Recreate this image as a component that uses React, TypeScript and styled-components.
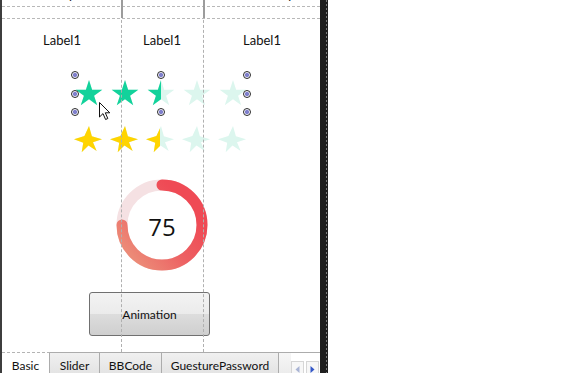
import React, { useId } from 'react';
import styled, { createGlobalStyle } from 'styled-components';

const TEAL = '#12d29b';
const GOLD = '#ffd400';
const FADED = '#dcf6ee';

// regular five point star, 28px box
const PLAIN_STAR =
  '14,0 17.14,9.67 27.31,9.67 19.09,15.65 22.23,25.33 14,19.35 5.77,25.33 8.91,15.65 0.69,9.67 10.86,9.67';
// the lower row leans a little, arms flattened
const LEAN_STAR =
  '15,0 17.9,10.15 28,13.3 19,16.3 22.7,25 14.5,19.5 7.7,26.3 9.2,16.75 0,13.3 10.4,9.9';

const GlobalStyle = createGlobalStyle`
  html, body {
    margin: 0;
    padding: 0;
    background: #ffffff;
  }
  body {
    font-family: Lato, "Noto Sans", sans-serif;
    color: #111111;
  }
`;

type StarProps = { color: string; level: number; points: string };

const Star = ({ color, level, points }: StarProps) => {
  const id = 'clip' + useId().replace(/[^a-zA-Z0-9]/g, '');
  return (
    <StarSvg viewBox="0 0 28 28">
      <polygon points={points} fill={FADED} />
      {level > 0 && (
        <>
          <clipPath id={id}>
            <rect x="0" y="0" width={28 * level} height="28" />
          </clipPath>
          <polygon points={points} fill={color} clipPath={`url(#${id})`} />
        </>
      )}
    </StarSvg>
  );
};

const levels = [1, 1, 0.5, 0, 0];

// arc goes clockwise from 12 o'clock; 75 ends at 9 o'clock
const arcPath = (value: number, r: number, c: number) => {
  const a = (value / 100) * Math.PI * 2;
  const x = c + r * Math.sin(a);
  const y = c - r * Math.cos(a);
  const large = value > 50 ? 1 : 0;
  return `M${c} ${c - r} A${r} ${r} 0 ${large} 1 ${x.toFixed(2)} ${y.toFixed(2)}`;
};

const Gauge = ({ value }: { value: number }) => (
  <GaugeWrap>
    <svg width="92" height="92" viewBox="0 0 92 92">
      <defs>
        <linearGradient id="ring" x1="80" y1="10" x2="10" y2="70" gradientUnits="userSpaceOnUse">
          <stop offset="0.2" stopColor="#ef4a55" />
          <stop offset="0.6" stopColor="#ed6163" />
          <stop offset="1" stopColor="#ec8a77" />
        </linearGradient>
      </defs>
      <circle cx="46" cy="46" r="40" fill="none" stroke="#f5e1e3" strokeWidth="11" />
      <path
        d={arcPath(value, 40, 46)}
        fill="none"
        stroke="url(#ring)"
        strokeWidth="11"
        strokeLinecap="round"
      />
    </svg>
    <GaugeValue>{value}</GaugeValue>
  </GaugeWrap>
);

const Cursor = () => (
  <CursorSvg width="12" height="19" viewBox="0 0 12 19">
    <path
      d="M0.5 0.5 L0.5 15 L4 11.6 L6.6 17.5 L8.8 16.5 L6.3 10.8 L10.8 10.8 Z"
      fill="#ffffff"
      stroke="#111111"
      strokeWidth="1"
      strokeLinejoin="round"
    />
  </CursorSvg>
);

const App = () => {
  return (
    <Screen>
      <GlobalStyle />
      <Designer>
        <TopStrip>
          <Cut>y</Cut>
          <Cut>y</Cut>
        </TopStrip>
        <HeaderRow />
        <LabelRow>
          <Label>Label1</Label>
          <Label>Label1</Label>
          <Label>Label1</Label>
        </LabelRow>
        <RatingRow>
          {levels.map((l, i) => (
            <Star key={i} color={TEAL} level={l} points={PLAIN_STAR} />
          ))}
          <Handle $x={0} $y={0} />
          <Handle $x={0} $y={18.5} />
          <Handle $x={0} $y={37} />
          <Handle $x={86} $y={0} />
          <Handle $x={86} $y={37} />
          <Handle $x={172} $y={0} />
          <Handle $x={172} $y={18.5} />
          <Handle $x={172} $y={37} />
          <Cursor />
        </RatingRow>
        <GoldRow>
          {levels.map((l, i) => (
            <Star key={i} color={GOLD} level={l} points={LEAN_STAR} />
          ))}
        </GoldRow>
        <Gauge value={75} />
        <Button>Animation</Button>
        <Spacer />
        <TabBar>
          <Tab $width={48} $active>
            Basic
          </Tab>
          <Tab $width={50}>Slider</Tab>
          <Tab $width={62}>BBCode</Tab>
          <Tab $width={117}>GuesturePassword</Tab>
          <PartTab />
          <Scroller>
            <ScrollBtn>
              <svg width="5" height="7" viewBox="0 0 5 7">
                <path d="M4.5 0 L0.5 3.5 L4.5 7 Z" fill="#a9b4d4" />
              </svg>
            </ScrollBtn>
            <ScrollBtn>
              <svg width="5" height="7" viewBox="0 0 5 7">
                <path d="M0.5 0 L4.5 3.5 L0.5 7 Z" fill="#3458c8" />
              </svg>
            </ScrollBtn>
          </Scroller>
        </TabBar>
        <Guide $left={119} />
        <Guide $left={201} />
      </Designer>
      <Frame />
      <Blank />
    </Screen>
  );
};

const Screen = styled.div`
  display: flex;
  width: 577px;
  height: 373px;
  overflow: hidden;
  background: #ffffff;
`;

const Designer = styled.div`
  position: relative;
  display: flex;
  flex-direction: column;
  width: 320px;
  height: 100%;
  box-sizing: border-box;
  border-left: 2px solid #3d3d3d;
  background: #ffffff;
`;

const Frame = styled.div`
  width: 8px;
  height: 100%;
  background:
    repeating-linear-gradient(#7c7c7c 0 2px, transparent 2px 4px) 6px 0 / 1px 100% no-repeat,
    #1e1e1e;
`;

const Blank = styled.div`
  flex: 1;
  background: #ffffff;
`;

const TopStrip = styled.div`
  display: flex;
  justify-content: space-between;
  height: 6px;
  padding: 0 26px 0 66px;
  overflow: hidden;
`;

const Cut = styled.span`
  margin-top: -12px;
  font-size: 13px;
  line-height: 13px;
`;

const HeaderRow = styled.div`
  height: 11px;
  border-top: 1px dashed #b8b8b8;
  border-bottom: 1px dashed #b8b8b8;
`;

const LabelRow = styled.div`
  display: grid;
  grid-template-columns: repeat(3, 100px);
  margin: 13px 0 0 10px;
`;

const Label = styled.span`
  font-size: 13px;
  line-height: 16px;
  text-align: center;
`;

const RatingRow = styled.div`
  position: relative;
  display: flex;
  align-items: center;
  gap: 8px;
  width: 172px;
  height: 37px;
  margin: 27px 0 0 73px;
`;

const GoldRow = styled.div`
  display: flex;
  align-items: center;
  gap: 8px;
  width: 172px;
  height: 28px;
  margin: 14px 0 0 72px;
`;

const StarSvg = styled.svg`
  display: block;
  flex: none;
  width: 28px;
  height: 28px;
  overflow: visible;
`;

const Handle = styled.span<{ $x: number; $y: number }>`
  position: absolute;
  left: ${({ $x }) => $x - 4}px;
  top: ${({ $y }) => $y - 4}px;
  width: 6px;
  height: 6px;
  border: 1px solid #2b2b2b;
  border-radius: 50%;
  background: radial-gradient(circle, #7f7fcc 0 1.8px, #f4f4ff 2.4px);
`;

const CursorSvg = styled.svg`
  position: absolute;
  left: 24px;
  top: 27px;
`;

const GaugeWrap = styled.div`
  display: grid;
  place-items: center;
  width: 92px;
  height: 92px;
  margin: 25px 0 0 114px;

  & > * {
    grid-area: 1 / 1;
  }
`;

const GaugeValue = styled.span`
  font-family: "Open Sans", "Noto Sans", sans-serif;
  font-size: 24px;
  line-height: 28px;
  padding-top: 3px;
  color: #111111;
`;

const Button = styled.button`
  width: 121px;
  height: 44px;
  margin: 21px 0 0 87px;
  padding: 0;
  border: 1px solid #707070;
  border-radius: 3px;
  background: linear-gradient(#f3f3f3 0%, #ebebeb 50%, #dddddd 50%, #cfcfcf 100%);
  font-family: Lato, "Noto Sans", sans-serif;
  font-size: 12px;
  font-weight: 400;
  color: #111111;
`;

const Spacer = styled.div`
  flex: 1;
`;

const TabBar = styled.div`
  display: flex;
  height: 21px;
`;

const Tab = styled.div<{ $width: number; $active?: boolean }>`
  flex: none;
  width: ${({ $width }) => $width}px;
  box-sizing: border-box;
  padding-top: 5px;
  font-size: 12px;
  line-height: 16px;
  text-align: center;
  color: #111111;
  border-top: 1px ${({ $active }) => ($active ? 'dashed #b4b4b4' : 'solid #acacac')};
  border-right: 1px solid #acacac;
  background: ${({ $active }) =>
    $active ? '#ffffff' : 'linear-gradient(#f0f0f0, #e4e4e4)'};
`;

const PartTab = styled.div`
  flex: none;
  width: 12px;
  box-sizing: border-box;
  border-top: 1px solid #acacac;
  background: linear-gradient(#f6f6f6, #ececec);
`;

const Scroller = styled.div`
  display: flex;
  gap: 2px;
  padding: 8px 0 0 0;
  border-top: 1px solid #acacac;
  flex: 1;
`;

const ScrollBtn = styled.div`
  display: flex;
  align-items: center;
  justify-content: center;
  width: 11px;
  height: 14px;
  border: 1px solid #d6d6d6;
  background: #f7f7f7;
`;

const Guide = styled.div<{ $left: number }>`
  position: absolute;
  top: 0;
  bottom: 21px;
  left: ${({ $left }) => $left}px;
  border-left: 1px dashed #b0b0b0;
  pointer-events: none;

  &::before {
    content: '';
    position: absolute;
    top: 0;
    left: -1px;
    width: 2px;
    height: 18px;
    background: #9c9c9c;
  }
`;

export default App;
